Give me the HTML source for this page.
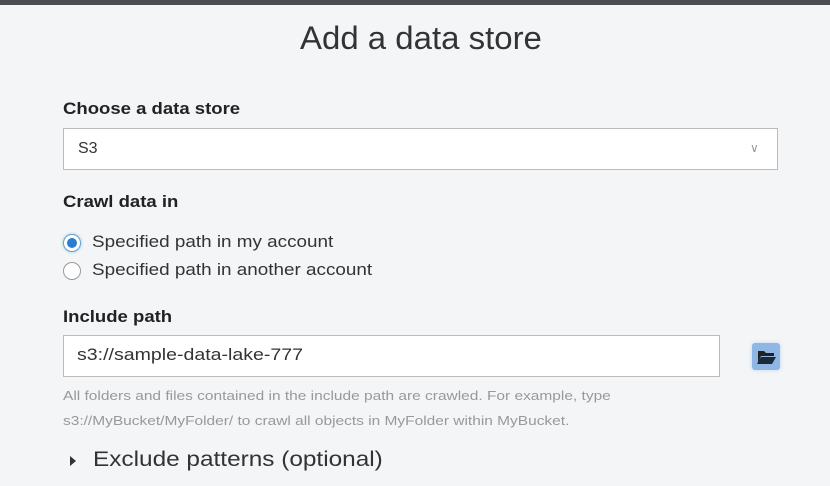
<!DOCTYPE html>
<html><head><style>
body{margin:0;width:830px;height:486px;background:#f4f5f7;font-family:"Liberation Sans",sans-serif;position:relative;overflow:hidden;color:#222}
.a{position:absolute;white-space:nowrap;transform-origin:0 50%}
.top{left:0;top:0;width:830px;height:5px;background:#4a4e54}
.lbl{font-weight:bold;font-size:17px;color:#222;transform:scaleX(1.09)}
.box{background:#fff;border:1px solid #bbb;box-sizing:border-box}
.r{width:18px;height:18px;border-radius:50%;border:1px solid #999;box-sizing:border-box;background:#fff}
.t{font-size:17px;color:#333;transform:scaleX(1.11)}
.help{font-size:13px;color:#999;transform:scaleX(1.19)}
</style></head><body>
<div class="a top"></div>
<div class="a" style="left:300px;top:20px;font-size:32px;color:#333;transform:scaleX(1.03)">Add a data store</div>
<div class="a lbl" style="left:63px;top:99px">Choose a data store</div>
<div class="a box" style="left:63px;top:128px;width:715px;height:42px"></div>
<div class="a t" style="left:78px;top:140px;font-size:16px;transform:none">S3</div>
<div class="a" style="left:750px;top:141px;color:#999;font-size:12px">&#8744;</div>
<div class="a lbl" style="left:63px;top:192px">Crawl data in</div>
<div class="a r" style="left:63px;top:234px;border-color:#6a9fd4;box-shadow:0 0 3px #8cc"><div style="margin:3px;width:10px;height:10px;border-radius:50%;background:#2b7bd0"></div></div>
<div class="a t" style="left:92px;top:232px">Specified path in my account</div>
<div class="a r" style="left:63px;top:262px"></div>
<div class="a t" style="left:92px;top:260px">Specified path in another account</div>
<div class="a lbl" style="left:63px;top:307px">Include path</div>
<div class="a box" style="left:63px;top:335px;width:657px;height:42px"></div>
<div class="a t" style="left:77px;top:345px;transform:scaleX(1.15)">s3://sample-data-lake-777</div>
<div class="a" style="left:752px;top:343px;width:28px;height:27px;background:#8fb6e4;border-radius:3px;box-shadow:0 0 4px #bcd6f2">
<svg width="28" height="27" viewBox="0 0 28 27"><path d="M6 8h6l2 2h8v3H9l-3 7z" fill="#222"/><path d="M9 14h15l-4 7H5z" fill="#1b2a3a"/></svg></div>
<div class="a help" style="left:63px;top:388px">All folders and files contained in the include path are crawled. For example, type</div>
<div class="a help" style="left:63px;top:413px">s3://MyBucket/MyFolder/ to crawl all objects in MyFolder within MyBucket.</div>
<div class="a" style="left:70px;top:456px;width:0;height:0;border-left:6px solid #333;border-top:5px solid transparent;border-bottom:5px solid transparent"></div>
<div class="a" style="left:93px;top:448px;font-size:21px;color:#333;transform:scaleX(1.16)">Exclude patterns (optional)</div>
</body></html>
